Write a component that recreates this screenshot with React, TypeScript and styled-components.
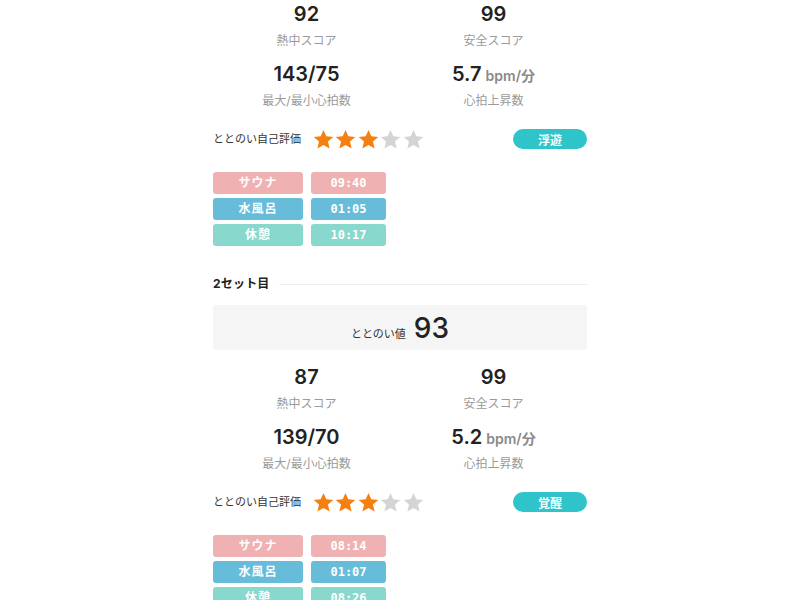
import React from "react";
import styled, { createGlobalStyle } from "styled-components";

const GlobalStyle = createGlobalStyle`
  html, body { margin: 0; padding: 0; background: #ffffff; }
  body {
    font-family: Inter, "Noto Sans CJK JP", sans-serif;
    color: #222222;
    overflow: hidden;
  }
`;

const Viewport = styled.div`
  width: 800px;
  height: 600px;
  overflow: hidden;
`;

const Page = styled.div`
  width: 374px;
  margin: -87px auto 0;
  display: flex;
  flex-direction: column;
  gap: 30px;
`;

const Set = styled.section`
  display: flex;
  flex-direction: column;
`;

const SetHead = styled.div`
  display: flex;
  align-items: center;
  gap: 9px;
  height: 16px;
`;

const SetTitle = styled.h3`
  margin: 0;
  font-size: 12px;
  font-weight: 700;
  color: #222;
  line-height: 16px;
  height: 16px;
  letter-spacing: 0.2px;
`;

const Rule = styled.div`
  flex: 1;
  height: 1px;
  background: #eeeeee;
`;

const ScoreBox = styled.div`
  margin-top: 13px;
  height: 45px;
  background: #f5f5f5;
  border-radius: 3px;
  display: flex;
  align-items: center;
  justify-content: center;
`;

const ScoreInner = styled.div`
  display: flex;
  align-items: baseline;
  gap: 8px;
  height: 32px;
`;

const ScoreLabel = styled.span`
  font-size: 11px;
  color: #333;
`;

const ScoreValue = styled.span`
  font-size: 28px;
  font-weight: 500;
  color: #222;
  line-height: 32px;
`;

const Stats = styled.div`
  margin-top: 17px;
  display: grid;
  grid-template-columns: 1fr 1fr;
  row-gap: 16px;
`;

const Stat = styled.div`
  display: flex;
  flex-direction: column;
  align-items: center;
  height: 44px;
`;

const StatValue = styled.div`
  font-size: 20px;
  font-weight: 600;
  line-height: 20px;
  height: 20px;
  color: #222;
  display: flex;
  align-items: baseline;
  gap: 4px;
`;

const Unit = styled.span`
  font-size: 14px;
  font-weight: 600;
  color: #8a8a8a;
`;

const StatLabel = styled.div`
  margin-top: 9px;
  font-size: 12px;
  line-height: 16px;
  height: 16px;
  color: #9a9a9a;
`;

const RatingRow = styled.div`
  margin-top: 21px;
  height: 20px;
  display: flex;
  align-items: center;
`;

const RatingLabel = styled.span`
  font-size: 11px;
  line-height: 16px;
  color: #333;
  margin-right: 12px;
`;

const Stars = styled.div`
  display: flex;
  gap: 1.5px;
`;

const Badge = styled.span`
  margin-left: auto;
  width: 74px;
  height: 20px;
  border-radius: 10px;
  background: #2ec4c9;
  color: #ffffff;
  font-size: 12px;
  font-weight: 700;
  display: flex;
  align-items: center;
  justify-content: center;
`;

const Phases = styled.div`
  margin-top: 23px;
  display: grid;
  grid-template-columns: 90px 75px;
  grid-auto-rows: 22px;
  column-gap: 8px;
  row-gap: 4px;
`;

const tagColors: Record<string, string> = {
  sauna: "#efb1b1",
  water: "#67bcd9",
  rest: "#88d8cd",
};

const Tag = styled.div<{ $kind: string; $mono?: boolean }>`
  height: 22px;
  border-radius: 3px;
  background: ${(p) => tagColors[p.$kind]};
  color: #ffffff;
  font-size: 12px;
  font-weight: 700;
  line-height: 16px;
  display: flex;
  align-items: center;
  justify-content: center;
  font-family: ${(p) =>
    p.$mono ? '"DejaVu Sans Mono", "Liberation Mono", monospace' : 'Inter, "Noto Sans CJK JP", sans-serif'};
  letter-spacing: ${(p) => (p.$mono ? "0" : "1px")};
`;

const Star: React.FC<{ on: boolean }> = ({ on }) => (
  <svg width="21" height="21" viewBox="0 0 24 24">
    <polygon
      points="12,1 15.2,8.4 23.2,9.1 17.1,14.4 19,22.4 12,18.2 5,22.4 6.9,14.4 0.8,9.1 8.8,8.4"
      fill={on ? "#f57f0f" : "#d4d4d4"}
    />
  </svg>
);

type SetData = {
  title: string;
  score: number;
  heat: number;
  safe: number;
  hr: string;
  rise: string;
  stars: number;
  mood: string;
  sauna: string;
  water: string;
  rest: string;
};

const sets: SetData[] = [
  {
    title: "1セット目",
    score: 95,
    heat: 92,
    safe: 99,
    hr: "143/75",
    rise: "5.7",
    stars: 3,
    mood: "浮遊",
    sauna: "09:40",
    water: "01:05",
    rest: "10:17",
  },
  {
    title: "2セット目",
    score: 93,
    heat: 87,
    safe: 99,
    hr: "139/70",
    rise: "5.2",
    stars: 3,
    mood: "覚醒",
    sauna: "08:14",
    water: "01:07",
    rest: "08:26",
  },
];

const SetView: React.FC<{ d: SetData }> = ({ d }) => (
  <Set>
    <SetHead>
      <SetTitle>{d.title}</SetTitle>
      <Rule />
    </SetHead>
    <ScoreBox>
      <ScoreInner>
        <ScoreLabel>ととのい値</ScoreLabel>
        <ScoreValue>{d.score}</ScoreValue>
      </ScoreInner>
    </ScoreBox>
    <Stats>
      <Stat>
        <StatValue>{d.heat}</StatValue>
        <StatLabel>熱中スコア</StatLabel>
      </Stat>
      <Stat>
        <StatValue>{d.safe}</StatValue>
        <StatLabel>安全スコア</StatLabel>
      </Stat>
      <Stat>
        <StatValue>{d.hr}</StatValue>
        <StatLabel>最大/最小心拍数</StatLabel>
      </Stat>
      <Stat>
        <StatValue>
          {d.rise}
          <Unit>bpm/分</Unit>
        </StatValue>
        <StatLabel>心拍上昇数</StatLabel>
      </Stat>
    </Stats>
    <RatingRow>
      <RatingLabel>ととのい自己評価</RatingLabel>
      <Stars>
        {[0, 1, 2, 3, 4].map((i) => (
          <Star key={i} on={i < d.stars} />
        ))}
      </Stars>
      <Badge>{d.mood}</Badge>
    </RatingRow>
    <Phases>
      <Tag $kind="sauna">サウナ</Tag>
      <Tag $kind="sauna" $mono>{d.sauna}</Tag>
      <Tag $kind="water">水風呂</Tag>
      <Tag $kind="water" $mono>{d.water}</Tag>
      <Tag $kind="rest">休憩</Tag>
      <Tag $kind="rest" $mono>{d.rest}</Tag>
    </Phases>
  </Set>
);

export default function App() {
  return (
    <>
      <GlobalStyle />
      <Viewport>
        <Page>
          {sets.map((s) => (
            <SetView key={s.title} d={s} />
          ))}
        </Page>
      </Viewport>
    </>
  );
}
